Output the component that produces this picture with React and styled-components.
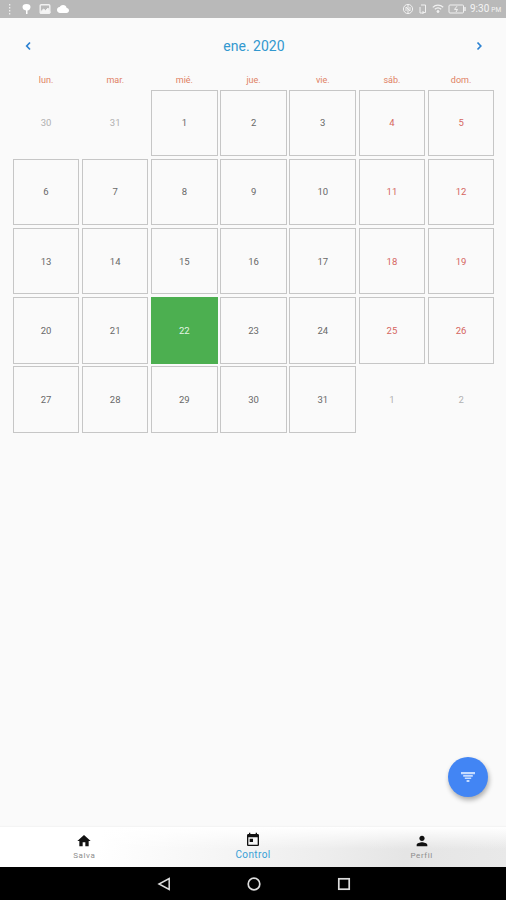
import React from 'react';
import styled, { createGlobalStyle } from 'styled-components';

const Global = createGlobalStyle`
  *, *::before, *::after { box-sizing: border-box; }
  body { margin: 0; background: #fafafa; font-family: Roboto, sans-serif; }
  svg { display: block; flex: none; }
`;

const Screen = styled.div`
  position: relative;
  display: flex;
  flex-direction: column;
  width: 506px;
  height: 900px;
  overflow: hidden;
  background: #fafafa;
`;

const StatusBar = styled.header`
  display: flex;
  align-items: center;
  justify-content: space-between;
  height: 18px;
  flex: none;
  padding: 0 3px 0 6px;
  background: #b9b9b9;
  color: #f4f4f4;
`;

const StatusGroup = styled.div`
  display: flex;
  align-items: center;
  gap: ${(p) => p.$gap}px;
`;

const Clock = styled.span`
  display: flex;
  align-items: baseline;
  gap: 2px;
  width: 33px;
  font-size: 10px;
  line-height: 12px;
  white-space: nowrap;
`;

const Meridiem = styled.small`
  font-size: 6.5px;
`;

const Main = styled.main`
  flex: 1;
  padding: 14px 11.7px 0 12.8px;
`;

const MonthBar = styled.div`
  display: flex;
  align-items: center;
  justify-content: space-between;
  height: 28px;
  padding: 0 9.6px 0 10.4px;
`;

const MonthTitle = styled.h1`
  margin: 0;
  font-size: 14px;
  font-weight: 400;
  line-height: 18px;
  color: #3298cf;
`;

const ArrowButton = styled.button`
  display: flex;
  padding: 0;
  border: 0;
  background: none;
  color: #2c82d2;
`;

const Week = styled.div`
  display: grid;
  grid-template-columns: repeat(7, 1fr);
  column-gap: 2.7px;
`;

const Weekdays = styled(Week)`
  margin-top: 13px;
  height: 16.6px;
`;

const Weekday = styled.span`
  text-align: center;
  font-size: 9px;
  line-height: 14px;
  color: #e08062;
`;

const Days = styled(Week)`
  grid-auto-rows: 66.5px;
  row-gap: 2.65px;
`;

const tones = { day: '#686868', weekend: '#d56560', outside: '#b0b0b0', selected: '#e4f6e4' };

const Day = styled.div`
  display: flex;
  align-items: center;
  justify-content: center;
  padding-top: 1px;
  border: 1px solid
    ${(p) => (p.$kind === 'outside' ? 'transparent' : p.$kind === 'selected' ? '#4caf50' : '#c6c6c6')};
  background: ${(p) => (p.$kind === 'selected' ? '#4caf50' : 'transparent')};
  color: ${(p) => tones[p.$kind]};
  font-size: 9.5px;
  line-height: 12px;
`;

const FilterButton = styled.button`
  position: absolute;
  left: 448px;
  top: 757px;
  display: flex;
  align-items: center;
  justify-content: center;
  width: 40px;
  height: 40px;
  padding: 0;
  border: 0;
  border-radius: 50%;
  background: #4285f4;
  box-shadow: 1px 3px 5px rgba(0, 0, 0, 0.32);
`;

const Tabs = styled.nav`
  display: grid;
  grid-template-columns: repeat(3, 1fr);
  height: 40px;
  flex: none;
  background: linear-gradient(180deg, #fff 0, rgba(255, 255, 255, 0) 22px),
    linear-gradient(100deg, #fff 20%, #f5f5f5 45%, #ededed 65%, #e5e5e5 80%, #e9e9e9 100%);
  box-shadow: 0 -1px 1px rgba(0, 0, 0, 0.025);
`;

const Tab = styled.div`
  display: flex;
  flex-direction: column;
  align-items: center;
  padding-top: ${(p) => (p.$active ? 5 : 6)}px;
  color: #111;
`;

const TabLabel = styled.span`
  margin-top: 1px;
  font-size: ${(p) => (p.$active ? 10 : 8)}px;
  line-height: 11px;
  letter-spacing: ${(p) => (p.$active ? 0.4 : 0.6)}px;
  color: ${(p) => (p.$active ? '#36a0d6' : '#8d8d8d')};
`;

const SystemBar = styled.footer`
  display: flex;
  align-items: center;
  justify-content: center;
  gap: 76px;
  height: 33px;
  flex: none;
  padding-left: 1px;
  background: #000;
`;

const Chevron = ({ d }) => (
  <svg width="12" height="12" viewBox="0 0 12 12" fill="none" stroke="currentColor" strokeWidth="1.7">
    <path d={d} />
  </svg>
);

const Glyph = ({ size = 16, d, color = 'currentColor' }) => (
  <svg width={size} height={size} viewBox="0 0 24 24" fill={color}>
    <path d={d} />
  </svg>
);

const Outline = ({ width = 12, children }) => (
  <svg width={width} height="12" viewBox={`0 0 ${width} 12`} fill="none" stroke="#f1f1f1" strokeWidth="1">
    {children}
  </svg>
);

const icons = {
  home: 'M10 20v-6h4v6h5v-8h3L12 3 2 12h3v8z',
  today: 'M19 3h-1V1h-2v2H8V1H6v2H5c-1.11 0-1.99.9-1.99 2L3 19c0 1.1.89 2 2 2h14c1.1 0 2-.9 2-2V5c0-1.1-.9-2-2-2zm0 16H5V8h14v11zM7 10h5v5H7z',
  person: 'M12 12c2.21 0 4-1.79 4-4s-1.79-4-4-4-4 1.79-4 4 1.79 4 4 4zm0 2c-2.67 0-8 1.34-8 4v2h16v-2c0-2.66-5.33-4-8-4z',
  cloud: 'M19.35 10.04A7.49 7.49 0 0 0 12 4C9.11 4 6.6 5.64 5.35 8.04A5.994 5.994 0 0 0 0 14c0 3.31 2.69 6 6 6h13c2.76 0 5-2.24 5-5 0-2.64-2.05-4.78-4.65-4.96z',
};

const weekdays = ['lun.', 'mar.', 'mié.', 'jue.', 'vie.', 'sáb.', 'dom.'];

const days = Array.from({ length: 35 }, (_, i) => {
  const n = i - 1;
  if (n < 1) return { label: 31 + n, kind: 'outside' };
  if (n > 31) return { label: n - 31, kind: 'outside' };
  return { label: n, kind: n === 22 ? 'selected' : i % 7 > 4 ? 'weekend' : 'day' };
});

const tabs = [
  { label: 'Salva', icon: icons.home },
  { label: 'Control', icon: icons.today, active: true },
  { label: 'Perfil', icon: icons.person },
];

export default function App() {
  return (
    <Screen>
      <Global />
      <StatusBar>
        <StatusGroup $gap={6}>
          <svg width="7" height="12" viewBox="0 0 7 12" fill="#eee">
            <path d="M3 1h1.3v1.5H3zM3 4h1.3v1.5H3zM3 7h1.3v1.5H3zM3 10h1.3v1.5H3z" />
          </svg>
          <svg width="14" height="12" viewBox="0 0 14 12" fill="#fff">
            <path d="M3.5 4a4 3 0 0 1 8 0c0 2-1.4 3.3-3 3.5v3.5H7V7.5C5 7.2 3.5 6 3.5 4z" />
          </svg>
          <Outline>
            <rect x="1.2" y="1.7" width="9.6" height="8.6" rx="1" strokeWidth="1.4" />
            <path d="M1.5 9l3-3 2 1.5L9 5l2 4v1H1.5z" fill="#f5f5f5" />
          </Outline>
          <Glyph size={12} d={icons.cloud} color="#fff" />
        </StatusGroup>
        <StatusGroup $gap={4}>
          <Outline>
            <circle cx="6" cy="6" r="4.6" />
            <path d="M4 8V4l4 4V4M6 2v8" />
          </Outline>
          <Outline width={10}>
            <path d="M3 2h4.5v7.5H5M2 4v6h3M5 8v3" />
          </Outline>
          <Outline>
            <path d="M.8 4.3c3-3 7.3-3 10.4 0M2.8 6.3c2-1.8 4.4-1.8 6.4 0" strokeWidth="1.2" />
            <circle cx="6" cy="8.5" r="1" fill="#f5f5f5" />
          </Outline>
          <Outline width={18}>
            <rect x="1" y="2" width="14.5" height="8" rx="1" />
            <path d="M17 4v4" strokeWidth="1.4" />
            <path d="M9 3.2L6.5 6.4h3L8 9" />
          </Outline>
          <Clock>
            9:30 <Meridiem>PM</Meridiem>
          </Clock>
        </StatusGroup>
      </StatusBar>
      <Main>
        <MonthBar>
          <ArrowButton aria-label="Anterior">
            <Chevron d="M7 2.5L3.7 6L7 9.5" />
          </ArrowButton>
          <MonthTitle>ene. 2020</MonthTitle>
          <ArrowButton aria-label="Siguiente">
            <Chevron d="M4.5 2.5L7.8 6L4.5 9.5" />
          </ArrowButton>
        </MonthBar>
        <Weekdays>
          {weekdays.map((name) => (
            <Weekday key={name}>{name}</Weekday>
          ))}
        </Weekdays>
        <Days>
          {days.map(({ label, kind }, i) => (
            <Day key={i} $kind={kind}>
              {label}
            </Day>
          ))}
        </Days>
      </Main>
      <Tabs>
        {tabs.map(({ label, icon, active }) => (
          <Tab key={label} $active={active}>
            <Glyph d={icon} />
            <TabLabel $active={active}>{label}</TabLabel>
          </Tab>
        ))}
      </Tabs>
      <SystemBar>
        <svg width="14" height="14" viewBox="0 0 14 14" fill="none" stroke="#ddd" strokeWidth="1.5">
          <path d="M12.2 1.6v10.8L2 7z" />
        </svg>
        <svg width="14" height="14" viewBox="0 0 14 14" fill="none" stroke="#ddd" strokeWidth="1.7">
          <circle cx="7" cy="7" r="5.8" />
        </svg>
        <svg width="14" height="14" viewBox="0 0 14 14" fill="none" stroke="#ddd" strokeWidth="1.7">
          <rect x="1.8" y="1.8" width="10.4" height="10.4" />
        </svg>
      </SystemBar>
      <FilterButton aria-label="Filtrar">
        <svg width="16" height="12" viewBox="0 0 16 12" fill="#c6dcff">
          <path d="M1 1h14v2.2H1zM3.2 4h9.6v1.8H3.2zM4.8 6.5h6.4V8H4.8zM6.6 9h2.8v2H6.6z" />
        </svg>
      </FilterButton>
    </Screen>
  );
}
